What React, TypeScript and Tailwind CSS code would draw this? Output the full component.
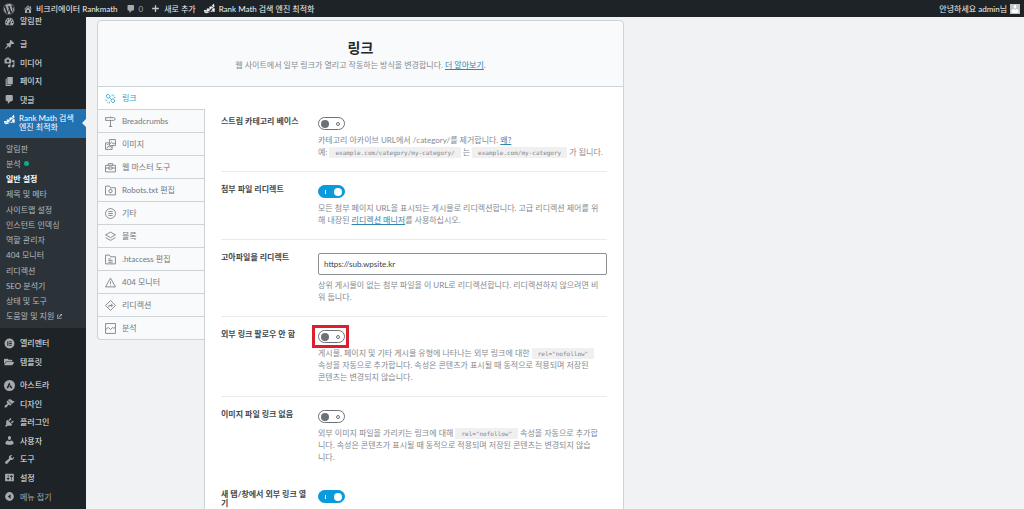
import React from 'react';
import { FaFolderOpen, FaWordpress, FaExternalLinkAlt } from 'react-icons/fa';

const iconPaths = {
  home: 'M16 8.5l1.53 1.53-1.06 1.06L10 4.6l-6.47 6.49-1.06-1.06L10 2.5l4 4v-2h2v4zm-6-2.46l6 5.99V18H4v-5.97zM12 17v-5H8v5h4z',
  plus: 'M17.500 8.500v3h-6v6h-3v-6h-6v-3h6v-6h3v6z',
  dashboard: 'M3.8 17h12.4c1.4-1.6 1.8-3.7 1.8-6 0-4.4-3.6-8-8-8s-8 3.600-8 8c0 2.300.4 4.400 1.800 6zM9 4.500h2v2H9zM5 6.500h2v2H5zM13 6.500h2v2h-2zM3.500 10.500h2v2h-2zM14.500 10.500h2v2h-2zM12.500 8l-1 5.500c.3 1.500-.5 2.500-1.500 2.500s-2-1.200-1.500-2.300z',
  post: 'M10.44 3.02l1.82-1.82 6.36 6.35-1.83 1.82c-1.05-.68-2.48-.57-3.41.36l-.75.75c-.92.93-1.04 2.35-.35 3.41l-1.83 1.82-2.41-2.41-2.8 2.79c-.42.42-3.38 2.71-3.8 2.29s1.86-3.39 2.28-3.81l2.79-2.79L4.1 9.36l1.83-1.82c1.05.69 2.48.57 3.4-.36l.75-.75c.93-.92 1.05-2.35.36-3.41z',
  media: 'M13 11V4c0-.55-.45-1-1-1h-1.67L9 1H5L3.67 3H2c-.55 0-1 .45-1 1v7c0 .55.45 1 1 1h10c.55 0 1-.45 1-1zM7 4.5c1.38 0 2.5 1.12 2.5 2.5S8.38 9.5 7 9.5 4.5 8.38 4.5 7 5.62 4.5 7 4.5zM14 6h5v10.5c0 1.38-1.12 2.5-2.5 2.5S14 17.88 14 16.5s1.12-2.5 2.5-2.5c.17 0 .34.02.5.05V9h-3V6zm-4 8.05V13h2v3.5c0 1.38-1.12 2.5-2.5 2.5S7 17.88 7 16.5 8.12 14 9.5 14c.17 0 .34.02.5.05z',
  page: 'M6 15V2h10v13H6zm-1 1h8v2H3V5h2v11z',
  comment: 'M5 2h9c1.1 0 2 .9 2 2v7c0 1.1-.9 2-2 2h-2l-5 5v-5H5c-1.1 0-2-.9-2-2V4c0-1.1.9-2 2-2z',
  rankMath: 'M0 16v-3.500h4.500V16zM5 16v-6h4.500v6zM10 16V6.500h4.500V16zM15 16V9.500h4.500V16zM0 17.500C7 16.500 14 12 16 5.500l-2 .5 3.500-5L19.500 7l-1.700-.7C16.500 12.500 11 18 3 18.500z',
  elementor: 'M10 1a9 9 0 100 18 9 9 0 000-18zM6 6h2v8H6zM9.500 6H14v1.700H9.500zM9.500 9.200H14v1.700H9.500zM9.500 12.300H14V14H9.500z',
  astra: 'M10 0a10 10 0 100 20 10 10 0 000-20zM9.500 4l1.800 3.600L7.500 15H4.500zM12 9l3.500 6h-3l-1-2H9.500z',
  appearance: 'M14.48 11.06L7.41 3.99l1.5-1.5c.5-.56 2.3-.47 3.51.32 1.21.8 1.43 1.28 2.91 2.1 1.18.64 2.45 1.26 4.45.85zm-.71.71L6.7 4.7 4.93 6.47c-.39.39-.39 1.02 0 1.41l1.06 1.06c.39.39.39 1.03 0 1.42-.6.6-1.43 1.11-2.21 1.69-.35.26-.7.53-1.01.84C1.43 14.23.4 16.08 1.4 17.07c.99 1 2.84-.03 4.18-1.36.31-.31.58-.66.85-1.02.57-.78 1.08-1.61 1.69-2.21.39-.39 1.02-.39 1.41 0l1.06 1.06c.39.39 1.02.39 1.41 0z',
  plugins: 'M13.11 4.36L9.87 7.6 8 5.73l3.24-3.24c.35-.34 1.05-.2 1.56.32.52.51.66 1.21.31 1.55zm-8 1.77l.91-1.12 9.01 9.01-1.19.84c-.71.71-2.63 1.16-3.82 1.16H6.14L4.9 17.26c-.59.59-1.54.59-2.12 0-.59-.58-.59-1.53 0-2.12l1.24-1.24v-3.88c0-1.13.4-3.19 1.09-3.89zm7.26 3.97l3.24-3.24c.34-.35 1.04-.21 1.55.31.52.51.66 1.21.31 1.55l-3.24 3.25z',
  users: 'M10 9.25c-2.27 0-2.73-3.44-2.73-3.44C7 4.02 7.82 2 9.97 2c2.16 0 2.98 2.02 2.71 3.81 0 0-.41 3.44-2.68 3.44zm0 2.57L12.72 10c2.39 0 4.52 2.33 4.52 4.53v2.49s-3.65 1.13-7.24 1.13c-3.65 0-7.24-1.13-7.24-1.13v-2.49c0-2.25 1.94-4.48 4.47-4.48z',
  tools: 'M16.68 9.77c-1.34 1.34-3.3 1.67-4.95.99l-5.41 6.52c-.99.99-2.59.99-3.58 0s-.99-2.59 0-3.57l6.52-5.42c-.68-1.65-.35-3.61.99-4.95 1.28-1.28 3.12-1.62 4.72-1.06l-2.89 2.89 2.82 2.82 2.86-2.87c.53 1.58.18 3.39-1.08 4.65z',
  settings: 'M18 16V4c0-.55-.45-1-1-1H3c-.55 0-1 .45-1 1v12c0 .55.45 1 1 1h14c.55 0 1-.45 1-1zM8 11h1c.55 0 1 .45 1 1s-.45 1-1 1H8v1.5c0 .28-.22.5-.5.5s-.5-.22-.5-.5V13H6c-.55 0-1-.45-1-1s.45-1 1-1h1V5.5c0-.28.22-.5.5-.5s.5.22.5.5V11zm5-2h-1c-.55 0-1-.45-1-1s.45-1 1-1h1V5.5c0-.28.22-.5.5-.5s.5.22.5.5V7h1c.55 0 1 .45 1 1s-.45 1-1 1h-1v5.5c0 .28-.22.5-.5.5s-.5-.22-.5-.5V9z',
  collapse: 'M10 2a8 8 0 100 16 8 8 0 000-16zM12 6v8l-5-4z',
};

type IconName = keyof typeof iconPaths;

const Icon = ({ name, className }: { name: IconName; className: string }) => (
  <svg viewBox="0 0 20 20" className={`shrink-0 ${className}`} fill="currentColor" fillRule="evenodd" aria-hidden="true">
    <path d={iconPaths[name]} />
  </svg>
);

interface MenuEntry {
  label: string;
  icon?: IconName;
}

const contentMenu: MenuEntry[] = [
  { label: '글', icon: 'post' },
  { label: '미디어', icon: 'media' },
  { label: '페이지', icon: 'page' },
  { label: '댓글', icon: 'comment' },
];

const subMenu = [
  '알림판',
  '분석',
  '일반 설정',
  '제목 및 메타',
  '사이트맵 설정',
  '인스턴트 인덱싱',
  '역할 관리자',
  '404 모니터',
  '리디렉션',
  'SEO 분석기',
  '상태 및 도구',
  '도움말 및 지원',
];

const builderMenu: MenuEntry[] = [{ label: '엘리멘터', icon: 'elementor' }, { label: '템플릿' }];

const siteMenu: MenuEntry[] = [
  { label: '아스트라', icon: 'astra' },
  { label: '디자인', icon: 'appearance' },
  { label: '플러그인', icon: 'plugins' },
  { label: '사용자', icon: 'users' },
  { label: '도구', icon: 'tools' },
  { label: '설정', icon: 'settings' },
];

const tabs = [
  {
    label: '링크',
    icon: (
      <>
        <rect x="2" y="3" width="7" height="6" rx="3" transform="rotate(45 5.5 6)" />
        <rect x="11" y="11" width="7" height="6" rx="3" transform="rotate(45 14.5 14)" />
        <path d="M8 8l4 4M13 2v3M17 4l-2 2M19 8h-3M1 13h3M4 18l2-2M8 19v-3" />
      </>
    ),
  },
  { label: 'Breadcrumbs', icon: <path d="M10 1v2M10 8v11M7 19h6M1 3h15l3 2.500L16 8H1z" /> },
  {
    label: '이미지',
    icon: <path d="M8 1h11v11H8zM8 7H1v12h12v-7M8 10l4-4 3 3 2-2 2 2M3 17l3-4 2 2 2-2 2 3M4 10h2M11 4h1" />,
  },
  { label: '웹 마스터 도구', icon: <path d="M1 6h18v12H1zM6 6V3h8v3M1 11h6M13 11h6M7 9h6v4H7z" /> },
  {
    label: 'Robots.txt 편집',
    icon: (
      <>
        <path d="M1 2h7l2 3h9v13H1z" />
        <circle cx="10" cy="11" r="3" />
        <path d="M10 7v1M10 14v1" />
      </>
    ),
  },
  {
    label: '기타',
    icon: (
      <>
        <circle cx="10" cy="10" r="9" />
        <path d="M6 6.500h8M6 10h8M6 13.500h8" />
      </>
    ),
  },
  { label: '블록', icon: <path d="M10 2l9 5-9 5-9-5zM1 12l9 5 9-5" /> },
  { label: '.htaccess 편집', icon: <path d="M1 2h7l2 3h9v13H1zM6 9h5M6 12h8M6 15h8" /> },
  { label: '404 모니터', icon: <path d="M10 2l9 16H1zM10 8v5M10 15v1" /> },
  { label: '리디렉션', icon: <path d="M10 1l9 9-9 9-9-9zM7 13v-3h6M11 7l3 3-3 3" /> },
  { label: '분석', icon: <path d="M1 1h18v18H1zM1 12l5-4 4 4 4-4 2 2 3-3" /> },
];

const MenuLink = ({ label, icon }: MenuEntry) => (
  <a href="#" className="flex flex-1 items-center gap-[5px] pl-1 text-[#f0f0f1]">
    <span className="flex w-[11px] shrink-0 text-[#a7aaad]">
      {icon ? <Icon name={icon} className="size-[11px]" /> : <FaFolderOpen className="size-[10px]" />}
    </span>
    {label}
  </a>
);

const AdminBar = () => (
  <header className="flex h-[17px] shrink-0 items-center gap-2 bg-[#1d2327] pr-1 pl-[3px] text-[#f0f0f1]">
    <a href="#" aria-label="WordPress">
      <FaWordpress className="size-3 text-[#a7aaad]" />
    </a>
    <a href="#" className="flex items-center gap-[3px]">
      <Icon name="home" className="size-[10px] text-[#a7aaad]" />
      비크리에이터 Rankmath
    </a>
    <a href="#" className="flex items-center gap-[3px] text-[#a7aaad]">
      <Icon name="comment" className="size-[10px]" />0
    </a>
    <a href="#" className="flex items-center gap-1">
      <Icon name="plus" className="size-[9px] text-[#c3c4c7]" />
      새로 추가
    </a>
    <a href="#" className="flex items-center gap-1">
      <Icon name="rankMath" className="size-[11px]" />
      Rank Math 검색 엔진 최적화
    </a>
    <a href="#" className="ml-auto flex items-center gap-[3px]">
      안녕하세요 admin님
      <span className="flex size-[10px] items-end justify-center bg-[#c3c4c7] text-white">
        <Icon name="users" className="size-[10px]" />
      </span>
    </a>
  </header>
);

const Sidebar = () => (
  <nav className="w-[86px] shrink-0 bg-[#1d2327] leading-none">
    <div className="flex h-2 items-center">
      <MenuLink label="알림판" icon="dashboard" />
    </div>
    <div className="mt-[10px] flex h-[74px] flex-col">
      {contentMenu.map((item) => (
        <MenuLink key={item.label} {...item} />
      ))}
    </div>
    <a href="#" className="relative flex h-[29px] gap-1 bg-[#2271b1] pt-[5px] pl-1 leading-[9px] text-white">
      <Icon name="rankMath" className="size-[11px]" />
      <span>
        Rank Math 검색
        <br />
        엔진 최적화
      </span>
      <span className="absolute top-[10px] right-0 border-y-4 border-r-4 border-y-transparent border-r-[#f0f2f4]" />
    </a>
    <div className="flex h-[190px] flex-col bg-[#2c3338] pt-[3px] pb-1">
      {subMenu.map((label) => (
        <a
          key={label}
          href="#"
          className={`flex flex-1 items-center gap-[3px] pl-[6px] ${label === '일반 설정' ? 'font-bold text-white' : 'text-[#b4b8bc]'}`}
        >
          {label}
          {label === '분석' && <span className="size-[5px] rounded-full bg-[#10ac84]" />}
          {label === '도움말 및 지원' && <FaExternalLinkAlt className="size-[5px]" />}
        </a>
      ))}
    </div>
    <div className="mt-[6px] flex h-[37px] flex-col">
      {builderMenu.map((item) => (
        <MenuLink key={item.label} {...item} />
      ))}
    </div>
    <div className="mt-[5px] flex h-[111px] flex-col">
      {siteMenu.map((item) => (
        <MenuLink key={item.label} {...item} />
      ))}
    </div>
    <button type="button" className="flex h-[19px] items-center gap-[5px] pl-1 text-[#a7aaad]">
      <Icon name="collapse" className="size-[11px]" />
      메뉴 접기
    </button>
  </nav>
);

const Toggle = ({ id, on }: { id: string; on?: boolean }) => (
  <label htmlFor={id} className="block w-[27px]">
    <input id={id} type="checkbox" defaultChecked={on} className="peer sr-only" />
    <span
      className={`flex h-[13px] items-center justify-between rounded-full border ${
        on ? 'border-[#0a9bdc] bg-[#0a9bdc] pr-[2px] pl-[6px]' : 'border-[#6c7178] bg-white pr-1 pl-[2px]'
      }`}
    >
      <span className={on ? 'h-1 w-px bg-white' : 'size-2 rounded-full bg-[#6c7178]'} />
      <span className={on ? 'size-2 rounded-full bg-white' : 'size-1 rounded-full border border-[#6c7178]'} />
    </span>
  </label>
);

const Code = ({ children }: { children: React.ReactNode }) => (
  <code className="bg-[#f0f0f1] px-[6px] py-[2px] font-['DejaVu_Sans_Mono',monospace] text-[6px] leading-none text-[#7f868d]">{children}</code>
);

const TextLink = ({ children }: { children: React.ReactNode }) => (
  <a href="#" className="text-[#3385ab] underline">
    {children}
  </a>
);

interface SettingProps {
  id: string;
  title: string;
  on?: boolean;
  control?: React.ReactNode;
  last?: boolean;
  highlighted?: boolean;
  children?: React.ReactNode;
}

const Setting = ({ id, title, on, control, last, highlighted, children }: SettingProps) => (
  <div className={`flex border-b py-[13px] ${last ? 'border-transparent' : 'border-[#e8eaec]'}`}>
    <label htmlFor={id} className="w-[97px] shrink-0 pr-4 leading-[9px] font-bold whitespace-nowrap text-[#43484e]">
      {title.split('\n').map((line) => (
        <span key={line} className="block">
          {line}
        </span>
      ))}
    </label>
    <div className="min-w-0 flex-1">
      <div className="relative">
        {control ?? <Toggle id={id} on={on} />}
        {highlighted && <span className="absolute -top-[5px] -left-[6px] h-[23px] w-[37px] border-[3px] border-[#dc1f2e]" />}
      </div>
      <p className="mt-1 leading-3 whitespace-nowrap text-[#858a90]">{children}</p>
    </div>
  </div>
);

const TabList = () => (
  <nav className="flex w-[108px] shrink-0 flex-col">
    {tabs.map((tab, i) => (
      <button
        key={tab.label}
        type="button"
        className={`flex h-[23px] items-center gap-[6px] border-b border-l border-[#ccd3d9] pl-[7px] last-of-type:rounded-bl ${
          i === 0 ? 'bg-white text-[#2b9fc9]' : 'border-r bg-[#f8fafb] text-[#73787e]'
        }`}
      >
        <svg viewBox="0 0 20 20" className="size-[11px] shrink-0" fill="none" stroke="currentColor" strokeWidth="1.5" aria-hidden="true">
          {tab.icon}
        </svg>
        {tab.label}
      </button>
    ))}
    <div className="flex-1 border-r border-[#ccd3d9]" />
  </nav>
);

const App = () => (
  <div className="flex h-screen flex-col overflow-hidden bg-[#f0f2f4] font-['Lato','Noto_Sans_CJK_KR',sans-serif] text-[8px]">
    <AdminBar />
    <div className="flex min-h-0 flex-1">
      <Sidebar />
      <main className="flex min-w-0 flex-1 flex-col pt-[3px] pr-[400px] pl-[11px]">
        <header className="flex h-[67px] shrink-0 flex-col items-center rounded-t border border-[#ccd3d9] bg-[#f8fafb] pt-[18px]">
          <h1 className="text-[14px] leading-[18px] font-bold text-[#23282d]">링크</h1>
          <p className="mt-[2px] leading-3 text-[#858a90]">
            웹 사이트에서 일부 링크가 열리고 작동하는 방식을 변경합니다. <TextLink>더 알아보기</TextLink>.
          </p>
        </header>
        <div className="flex min-h-0 flex-1">
          <TabList />
          <section className="min-w-0 flex-1 overflow-hidden border-r border-[#ccd3d9] bg-white px-4 pt-[17px]">
            <Setting id="strip-category" title="스트립 카테고리 베이스">
              카테고리 아카이브 URL에서 /category/를 제거합니다. <TextLink>왜?</TextLink>
              <br />
              예: <Code>example.com/category/my-category/</Code> 는 <Code>example.com/my-category</Code> 가 됩니다.
            </Setting>
            <Setting id="redirect-attachments" title="첨부 파일 리디렉트" on>
              모든 첨부 페이지 URL을 표시되는 게시물로 리디렉션합니다. 고급 리디렉션 제어를 위
              <br />
              해 내장된 <TextLink>리디렉션 매니저</TextLink>를 사용하십시오.
            </Setting>
            <Setting
              id="redirect-orphan"
              title="고아파일을 리디렉트"
              control={
                <input
                  id="redirect-orphan"
                  type="text"
                  defaultValue="https://sub.wpsite.kr"
                  className="block h-[22px] w-full rounded-xs border border-[#8c8f94] bg-white px-[5px] text-[#3c434a]"
                />
              }
            >
              상위 게시물이 없는 첨부 파일을 이 URL로 리디렉션합니다. 리디렉션하지 않으려면 비
              <br />워 둡니다.
            </Setting>
            <Setting id="nofollow-external" title="외부 링크 팔로우 안 함" highlighted>
              게시물, 페이지 및 기타 게시물 유형에 나타나는 외부 링크에 대한 <Code>rel="nofollow"</Code>
              <br />
              속성을 자동으로 추가합니다. 속성은 콘텐츠가 표시될 때 동적으로 적용되며 저장된
              <br />
              콘텐츠는 변경되지 않습니다.
            </Setting>
            <Setting id="nofollow-image" title="이미지 파일 링크 없음" last>
              외부 이미지 파일을 가리키는 링크에 대해 <Code>rel="nofollow"</Code> 속성을 자동으로 추가합
              <br />
              니다. 속성은 콘텐츠가 표시될 때 동적으로 적용되며 저장된 콘텐츠는 변경되지 않습
              <br />
              니다.
            </Setting>
            <Setting id="new-window" title={'새 탭/창에서 외부 링크 열\n기'} on />
          </section>
        </div>
      </main>
    </div>
  </div>
);

export default App;
